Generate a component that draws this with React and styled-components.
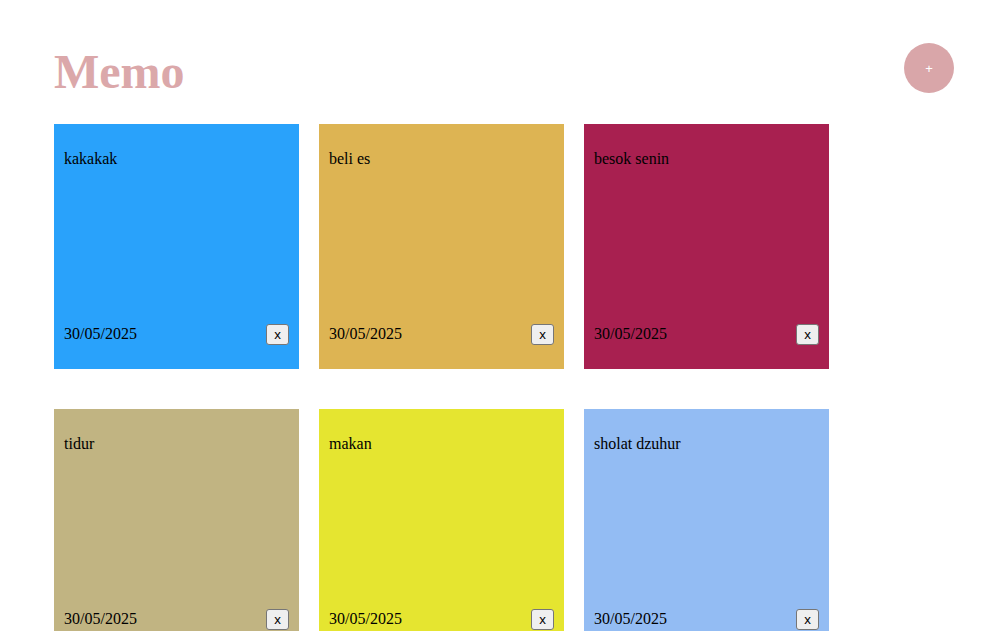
import React from "react";
import styled, { createGlobalStyle } from "styled-components";

const GlobalStyle = createGlobalStyle`
  body {
    margin: 0;
    background: #ffffff;
    font-family: "Liberation Serif", "Times New Roman", serif;
  }
`;

const Page = styled.div`
  width: 900px;
  margin-left: 54px;
  padding-top: 43px;
`;

const Header = styled.div`
  display: flex;
  justify-content: space-between;
  align-items: flex-start;
  margin-bottom: 23px;
`;

const Title = styled.h1`
  margin: 2px 0 3px 0;
  font-size: 48px;
  font-weight: 700;
  color: #dba8aa;
  line-height: 53px;
`;

const AddButton = styled.button`
  width: 50px;
  height: 50px;
  border-radius: 50%;
  border: none;
  background: #d9a6a9;
  color: #ffffff;
  font-family: "Liberation Sans", Arial, sans-serif;
  font-size: 13px;
  padding: 0;
`;

const Grid = styled.div`
  display: grid;
  grid-template-columns: repeat(3, 245px);
  column-gap: 20px;
  row-gap: 40px;
`;

const Card = styled.div`
  width: 245px;
  height: 245px;
  box-sizing: border-box;
  padding: 10px 10px 24px 10px;
  background: ${(p) => p.color};
  display: flex;
  flex-direction: column;
  justify-content: space-between;
`;

const Note = styled.p`
  margin: 16px 0 0 0;
  font-size: 16px;
  line-height: 18px;
  color: #000;
`;

const Footer = styled.div`
  display: flex;
  justify-content: space-between;
  align-items: center;
  font-size: 16px;
  color: #000;
`;

const DateText = styled.span`
  margin-bottom: 2px;
`;

const DeleteButton = styled.button`
  width: 23px;
  height: 21px;
  padding: 0;
  box-sizing: border-box;
  background: #efefef;
  border: 1px solid #767676;
  border-radius: 3px;
  font-family: "Liberation Sans", Arial, sans-serif;
  font-size: 13.33px;
  color: #000;
`;

const memos = [
  { text: "kakakak", color: "#29a2fb" },
  { text: "beli es", color: "#ddb453" },
  { text: "besok senin", color: "#a82050" },
  { text: "tidur", color: "#c1b482" },
  { text: "makan", color: "#e5e530" },
  { text: "sholat dzuhur", color: "#93bcf3" },
];

export default function App() {
  return (
    <>
      <GlobalStyle />
      <Page>
        <Header>
          <Title>Memo</Title>
          <AddButton>+</AddButton>
        </Header>
        <Grid>
          {memos.map((m, i) => (
            <Card key={i} color={m.color}>
              <Note>{m.text}</Note>
              <Footer>
                <DateText>30/05/2025</DateText>
                <DeleteButton>x</DeleteButton>
              </Footer>
            </Card>
          ))}
        </Grid>
      </Page>
    </>
  );
}
